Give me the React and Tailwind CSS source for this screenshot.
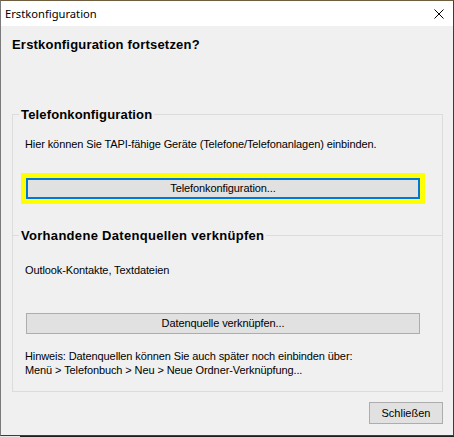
import React from "react";

const ui = { fontFamily: '"Liberation Sans", Arial, sans-serif' };

export default function App() {
  return (
    <div className="w-[454px] h-[437px] flex flex-col bg-[#1f1f1f]">
      <div className="h-[436px] flex flex-col border border-[#7a7a7a] border-t-[#6e5d3e] border-r-[#3c3c3c] border-b-[#3c3c3c]">
        <div className="h-[25px] shrink-0 bg-white flex items-center justify-between pl-[4px] pr-[9px]">
          <span className="text-[11.2px] text-black leading-[16px] pt-[1px]" style={{ fontFamily: '"Noto Sans", "Open Sans", sans-serif' }}>
            Erstkonfiguration
          </span>
          <svg width="10" height="10" viewBox="0 0 10 10" className="mt-[1px]">
            <path d="M0.5 0.5 L9.5 9.5 M9.5 0.5 L0.5 9.5" stroke="#000" strokeWidth="1" fill="none" />
          </svg>
        </div>
        <div className="flex-1 bg-[#f0f0f0] flex flex-col pl-[11px] pr-[10px] pt-[11px] text-black" style={ui}>
          <div className="text-[13px] font-bold leading-[15px] tracking-[0.2px]">Erstkonfiguration fortsetzen?</div>
          <fieldset className="mt-[55px] border border-[#dcdcdc] pb-[14px] flex flex-col">
            <legend className="ml-[6px] px-[2px] text-[13px] font-bold leading-[15px] tracking-[0.15px]">Telefonkonfiguration</legend>
            <div className="mt-[16px] pl-[12px] text-[11px] leading-[13px] tracking-[-0.1px]">
              Hier können Sie TAPI-fähige Geräte (Telefone/Telefonanlagen) einbinden.
            </div>
            <div className="mt-[22px] ml-[8px] w-[404px] h-[31px] bg-[#ffff00] p-[5px]">
              <div className="w-full h-full bg-[#e1e1e1] border-2 border-[#0078d7] flex items-center justify-center text-[11px] leading-[13px] tracking-[-0.1px]">
                Telefonkonfiguration...
              </div>
            </div>
            <div className="mt-[24px] h-[15px] flex items-center">
              <div className="w-[6px] h-px bg-[#dcdcdc]" />
              <div className="px-[2px] text-[13px] font-bold leading-[15px] tracking-[0.3px]">Vorhandene Datenquellen verknüpfen</div>
              <div className="flex-1 h-px bg-[#dcdcdc]" />
            </div>
            <div className="mt-[21px] pl-[12px] text-[11px] leading-[13px] tracking-[-0.1px]">Outlook-Kontakte, Textdateien</div>
            <div className="mt-[36px] ml-[13px] w-[394px] h-[21px] bg-[#e1e1e1] border border-[#adadad] flex items-center justify-center text-[11px] leading-[13px] tracking-[-0.1px]">
              Datenquelle verknüpfen...
            </div>
            <div className="mt-[15px] pl-[12px] text-[11px] leading-[14px] tracking-[-0.1px]">
              <div>Hinweis: Datenquellen können Sie auch später noch einbinden über:</div>
              <div>Menü &gt; Telefonbuch &gt; Neu &gt; Neue Ordner-Verknüpfung...</div>
            </div>
          </fieldset>
          <div className="mt-[10px] flex justify-end">
            <div className="w-[74px] h-[22px] bg-[#e1e1e1] border border-[#adadad] flex items-center justify-center text-[11px] leading-[13px]">
              Schließen
            </div>
          </div>
        </div>
      </div>
      <div className="h-px flex">
        <div className="w-[20px] bg-[#e8e8e8]" />
        <div className="flex-1 bg-[#1f1f1f]" />
      </div>
    </div>
  );
}
